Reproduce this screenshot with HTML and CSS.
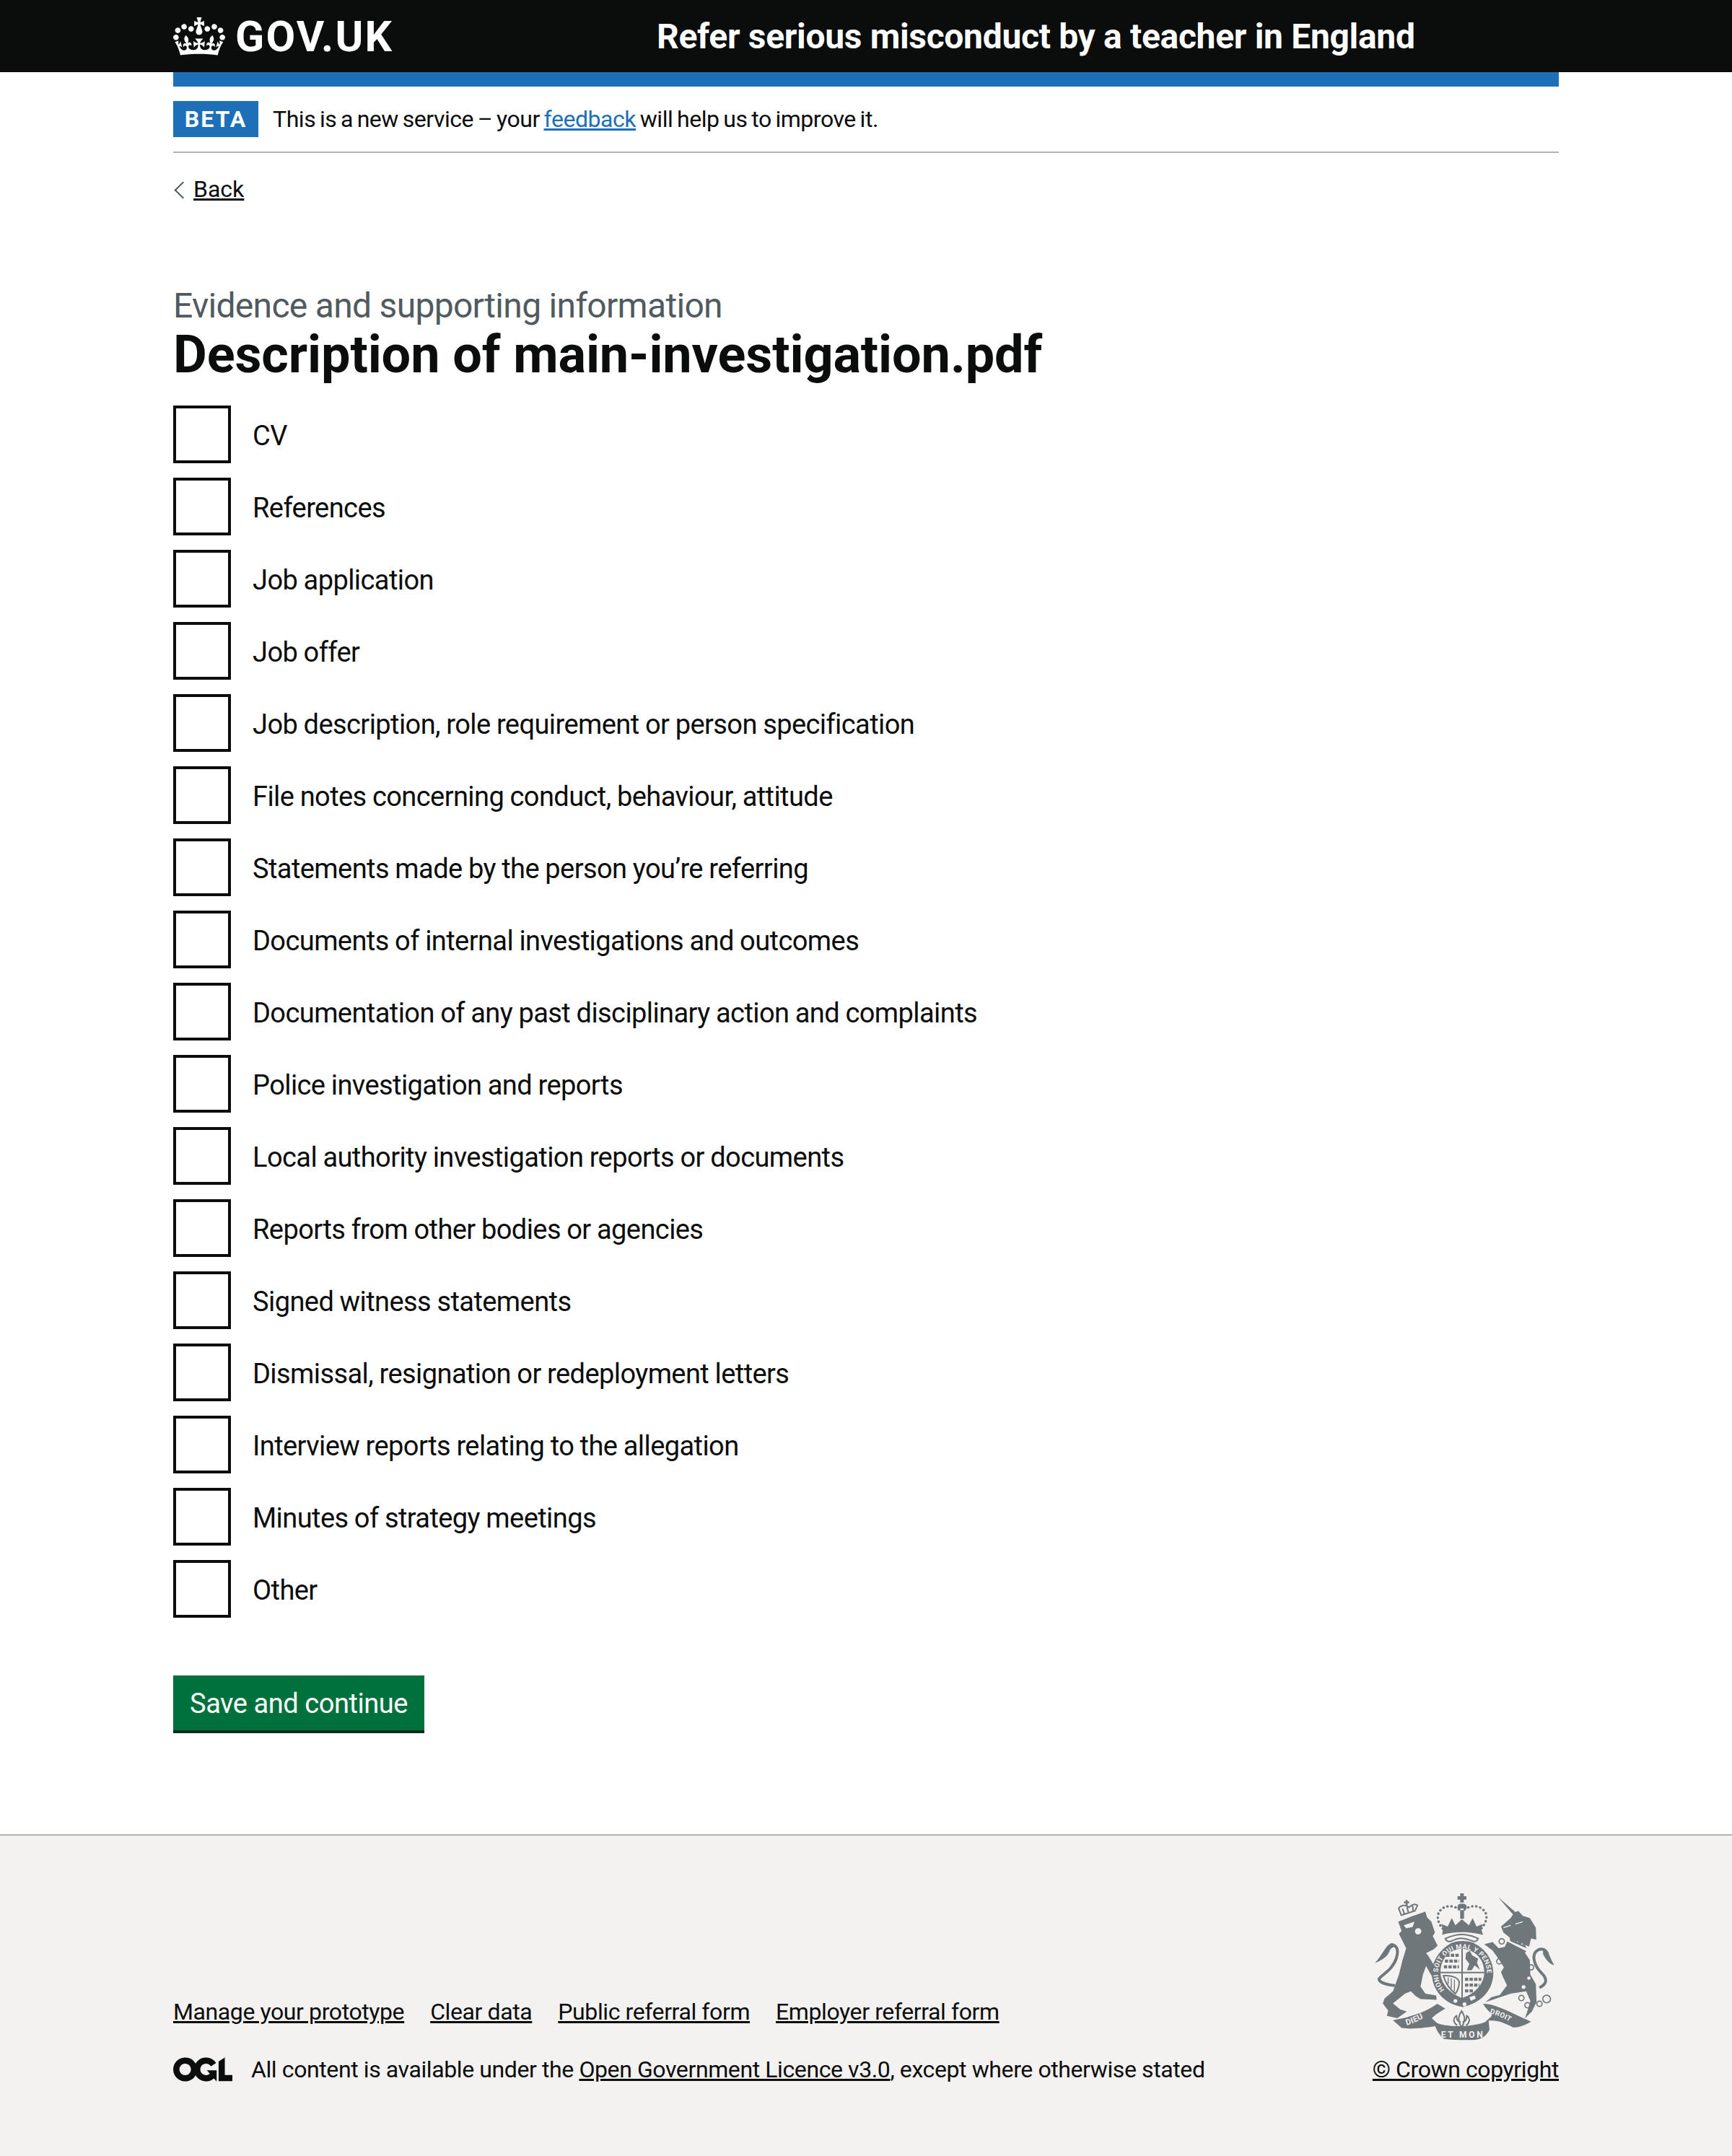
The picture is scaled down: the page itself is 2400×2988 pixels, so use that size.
FILE: index.html
```html
<!DOCTYPE html>
<html lang="en">
<head>
    <meta charset="UTF-8">
    <meta name="viewport" content="width=device-width, initial-scale=1.0">
    <title>Description of main-investigation.pdf</title>
    <link rel="stylesheet" href="styles.css">
</head>
<body>
    <header class="site-header">
        <div class="header-inner">
            <a class="logo" href="#">
                <svg class="crown" viewBox="0 0 132 97" aria-hidden="true"><path fill="currentColor" fill-rule="evenodd" d="M25 30.2c3.5 1.5 7.7-.2 9.1-3.7 1.5-3.6-.2-7.8-3.9-9.2-3.6-1.4-7.6.3-9.1 3.9-1.4 3.5.3 7.5 3.9 9zM9 39.5c3.6 1.5 7.8-.2 9.2-3.7 1.5-3.6-.2-7.8-3.9-9.1-3.6-1.5-7.6.2-9.1 3.8-1.4 3.5.3 7.5 3.8 9zM4.4 57.2c3.5 1.5 7.7-.2 9.1-3.8 1.5-3.6-.2-7.7-3.9-9.1-3.5-1.5-7.6.3-9.1 3.8-1.4 3.5.3 7.6 3.9 9.1zm38.3-21.4c3.5 1.5 7.7-.2 9.1-3.8 1.5-3.6-.2-7.7-3.9-9.1-3.6-1.5-7.6.3-9.1 3.8-1.3 3.6.4 7.7 3.9 9.1zm64.4-5.6c-3.6 1.5-7.8-.2-9.1-3.7-1.5-3.6.2-7.8 3.8-9.2 3.6-1.4 7.7.3 9.2 3.9 1.3 3.5-.4 7.5-3.9 9zm15.9 9.3c-3.6 1.5-7.7-.2-9.1-3.7-1.5-3.6.2-7.8 3.7-9.1 3.6-1.5 7.7.2 9.2 3.8 1.5 3.5-.3 7.5-3.8 9zm4.7 17.7c-3.6 1.5-7.8-.2-9.2-3.8-1.5-3.6.2-7.7 3.9-9.1 3.6-1.5 7.7.3 9.2 3.8 1.3 3.5-.4 7.6-3.9 9.1zM89.3 35.8c-3.6 1.5-7.8-.2-9.2-3.8-1.4-3.6.2-7.7 3.9-9.1 3.6-1.5 7.7.3 9.2 3.8 1.4 3.6-.3 7.7-3.9 9.1zM69.7 17.7l8.9 4.7V9.3l-8.9 2.8c-.2-.3-.5-.6-.9-.9L72.4 0H59.6l3.5 11.2c-.3.3-.6.5-.9.9l-8.8-2.8v13.1l8.8-4.7c.3.3.6.7.9.9l-5 15.4v.1c-.2.8-.4 1.6-.4 2.4 0 4.1 3.1 7.5 7 8.1h.2c.3 0 .7.1 1 .1.4 0 .7 0 1-.1h.2c4-.6 7.1-4.1 7.1-8.1 0-.8-.1-1.7-.4-2.4V34l-5.1-15.4c.4-.2.7-.6 1-.9zM66 92.8c16.9 0 32.8 1.1 47.1 3.2 4-16.9 8.9-26.7 14-33.5l-9.6-3.4c1 4.9 1.1 7.2 0 10.2-1.5-1.4-3-4.3-4.2-8.7L108.6 76c2.8-2 5-3.2 7.5-3.3-4.4 9.4-10 11.9-13.6 11.2-4.3-.8-6.3-4.6-5.6-7.9 1-4.7 5.7-5.9 8-.5 4.3-8.7-3-11.4-7.6-8.8 7.1-7.2 7.9-13.5 2.1-21.1-8 6.1-8.1 12.3-4.5 20.8-4.7-5.4-12.1-2.5-9.5 6.2 3.4-5.2 7.9-2 7.2 3.1-.6 4.3-6.4 7.8-13.5 7.2-10.3-.9-10.9-8-11.2-13.8 2.5-.5 7.1 1.8 11 7.3L80.2 60c-4.1 4.4-8 5.3-12.3 5.4 1.4-4.4 8-11.6 8-11.6H55.5s6.4 7.2 7.9 11.6c-4.2-.1-8-1-12.3-5.4l1.4 16.4c3.9-5.5 8.5-7.7 10.9-7.3-.3 5.8-.9 12.8-11.1 13.8-7.2.6-12.9-2.9-13.5-7.2-.7-5 3.8-8.3 7.1-3.1 2.7-8.7-4.6-11.6-9.4-6.2 3.7-8.5 3.6-14.7-4.6-20.8-5.8 7.6-5 13.9 2.2 21.1-4.7-2.6-11.9.1-7.7 8.8 2.3-5.5 7.1-4.2 8.1.5.7 3.3-1.3 7.1-5.7 7.9-3.5.7-9-1.8-13.5-11.2 2.5.1 4.7 1.3 7.5 3.3l-4.7-15.4c-1.2 4.4-2.7 7.2-4.3 8.7-1.1-3-.9-5.3 0-10.2l-9.5 3.4c5 6.9 9.9 16.7 14 33.5 14.8-2.1 30.8-3.2 47.7-3.2z"/></svg>
                <span class="logo-text">GOV.UK</span>
            </a>
            <a class="service-name" href="#">Refer serious misconduct by a teacher in England</a>
        </div>
    </header>

    <div class="width-container">
        <div class="blue-bar"></div>
        <div class="phase-banner">
            <strong class="tag">BETA</strong>
            <span>This is a new service – your <a class="link-blue" href="#">feedback</a> will help us to improve it.</span>
        </div>
        <a class="back-link" href="#">Back</a>

        <main class="main">
            <span class="caption">Evidence and supporting information</span>
            <h1>Description of main-investigation.pdf</h1>
            <form onsubmit="return false;">
                <div class="checkboxes">
                    <label class="checkbox"><input type="checkbox"><span>CV</span></label>
                    <label class="checkbox"><input type="checkbox"><span>References</span></label>
                    <label class="checkbox"><input type="checkbox"><span>Job application</span></label>
                    <label class="checkbox"><input type="checkbox"><span>Job offer</span></label>
                    <label class="checkbox"><input type="checkbox"><span>Job description, role requirement or person specification</span></label>
                    <label class="checkbox"><input type="checkbox"><span>File notes concerning conduct, behaviour, attitude</span></label>
                    <label class="checkbox"><input type="checkbox"><span>Statements made by the person you’re referring</span></label>
                    <label class="checkbox"><input type="checkbox"><span>Documents of internal investigations and outcomes</span></label>
                    <label class="checkbox"><input type="checkbox"><span>Documentation of any past disciplinary action and complaints</span></label>
                    <label class="checkbox"><input type="checkbox"><span>Police investigation and reports</span></label>
                    <label class="checkbox"><input type="checkbox"><span>Local authority investigation reports or documents</span></label>
                    <label class="checkbox"><input type="checkbox"><span>Reports from other bodies or agencies</span></label>
                    <label class="checkbox"><input type="checkbox"><span>Signed witness statements</span></label>
                    <label class="checkbox"><input type="checkbox"><span>Dismissal, resignation or redeployment letters</span></label>
                    <label class="checkbox"><input type="checkbox"><span>Interview reports relating to the allegation</span></label>
                    <label class="checkbox"><input type="checkbox"><span>Minutes of strategy meetings</span></label>
                    <label class="checkbox"><input type="checkbox"><span>Other</span></label>
                </div>
                <button class="button" type="submit">Save and continue</button>
            </form>
        </main>
    </div>

    <footer class="site-footer">
        <div class="footer-inner">
            <div class="footer-left">
                <ul class="footer-links">
                    <li><a href="#">Manage your prototype</a></li>
                    <li><a href="#">Clear data</a></li>
                    <li><a href="#">Public referral form</a></li>
                    <li><a href="#">Employer referral form</a></li>
                </ul>
                <div class="licence">
                    <svg class="ogl" viewBox="0 0 483.2 195.7" aria-hidden="true"><path fill="currentColor" d="M421.5 142.8V.1l-50.7 32.3v161.1h112.4v-50.7zm-122.3-9.6A47.12 47.12 0 0 1 221 97.8c0-26 21.1-47.1 47.1-47.1 16.7 0 31.4 8.7 39.7 21.8l42.7-27.2A97.63 97.63 0 0 0 268.1 0c-36.5 0-68.3 20.1-85.1 49.7A98 98 0 0 0 97.8 0C43.9 0 0 43.9 0 97.8s43.9 97.8 97.8 97.8c36.5 0 68.3-20.1 85.1-49.7a97.76 97.76 0 0 0 149.6 25.4l19.4 22.2h3v-87.8h-80l24.3 27.5zM97.8 145c-26 0-47.1-21.1-47.1-47.1s21.1-47.1 47.1-47.1 47.2 21 47.2 47S123.8 145 97.8 145"/></svg>
                    <span>All content is available under the <a href="#">Open Government Licence v3.0</a>, except where otherwise stated</span>
                </div>
            </div>
            <div class="footer-right">
                <svg class="crest" viewBox="60 60 780 640" aria-hidden="true">
                    <defs>
                        <path id="garter" d="M368 477 A102 102 0 1 1 512 477"/>
                        <path id="ribbonLeft" d="M205 622 Q262 606 316 566"/>
                        <path id="ribbonRight" d="M552 572 Q610 585 668 628"/>
                    </defs>
                    <!-- lion -->
                    <path class="crest-dark" d="M172 190 C210 175 250 160 285 148 L292 172 L310 190 L325 235 L316 250 L336 290 L320 305 L290 320 L335 395 L347 430 L328 445 L305 405 L288 375 L275 410 L265 460 L285 490 L330 497 L332 515 L265 512 L245 500 L225 480 L200 490 L150 530 L180 555 L208 564 L168 592 L125 582 L130 560 L108 530 L115 510 L150 480 L175 410 L190 350 L205 300 L190 270 L175 240 L186 228 Z"/>
                    <path class="crest-tail" d="M158 456 C120 452 92 442 92 428 C105 410 150 390 165 340 C175 305 165 285 140 285"/>
                    <path class="crest-dark" d="M145 280 C120 285 110 325 75 362 C95 355 125 340 135 315 C140 300 150 295 160 295 Z"/>
                    <path class="crest-light" d="M195 205 L240 190 L232 212 L205 218 Z M242 228 A13 13 0 1 0 268 232 A13 13 0 1 0 242 228 Z"/>
                    <path class="crest-cut" d="M290 320 L345 385 M285 470 L310 478"/>
                    <!-- lion crown -->
                    <path class="crest-line" d="M185 163 L242 145 L252 122 C240 112 228 120 217 130 C205 118 182 120 174 135 Z M208 128 L214 150 M190 136 L197 156 M232 124 L234 146"/>
                    <path class="crest-dark" d="M203 100 H211 V106 H218 V113 H211 V122 H203 V113 H196 V106 H203 Z"/>
                    <!-- unicorn -->
                    <path class="crest-dark" d="M588 88 L660 150 L672 145 L690 165 L720 175 L745 215 L747 265 L725 260 L718 290 L700 320 L720 350 L722 410 L745 450 L748 525 L728 565 L700 592 L712 555 L722 520 L705 480 L640 490 L580 510 L535 525 L560 505 L595 495 L625 455 L608 420 L600 400 L612 380 L590 345 L565 310 L530 284 L565 275 L590 300 L615 295 L635 255 L610 235 L600 210 L640 175 L650 160 Z"/>
                    <path class="crest-tail" d="M760 465 C790 450 795 430 770 405 C745 380 725 340 745 315 C765 295 785 305 795 325"/>
                    <path class="crest-dark" d="M775 300 C800 310 805 345 822 372 C800 365 785 345 775 325 Z"/>
                    <path class="crest-light" d="M628 254 L720 296 L712 316 L622 270 Z"/>
                    <path class="crest-dark" d="M636 264 L642 252 L652 266 L662 260 L668 276 L680 270 L686 286 L698 282 L706 300 L640 272 Z"/>
                    <path class="crest-cut" d="M610 215 L640 205 M660 200 L690 190"/>
                    <circle class="crest-ring" cx="603" cy="272" r="11"/>
                    <circle class="crest-ring" cx="593" cy="355" r="11"/>
                    <circle class="crest-ring" cx="725" cy="380" r="11"/>
                    <circle class="crest-light" cx="716" cy="425" r="7"/>
                    <circle class="crest-light" cx="694" cy="462" r="8"/>
                    <circle class="crest-ring" cx="685" cy="508" r="11"/>
                    <circle class="crest-ring" cx="710" cy="538" r="11"/>
                    <circle class="crest-ring" cx="760" cy="532" r="11"/>
                    <circle class="crest-ring" cx="790" cy="512" r="16"/>
                    <!-- crown over shield -->
                    <path class="crest-dark" d="M430 72 H445 V84 H456 V98 H445 V110 H430 V98 H419 V84 H430 Z M430 142 H446 V178 H430 Z"/>
                    <path class="crest-dark" d="M420 122 C425 112 450 112 456 122 L458 135 H418 Z"/>
                    <path class="crest-dots" d="M437 152 C420 125 375 115 350 140 C328 160 335 195 360 222 M437 152 C455 125 500 115 525 140 C550 160 540 195 515 222"/>
                    <path class="crest-dark" d="M358 222 L352 200 L378 210 L395 175 L410 205 L437 180 L466 205 L482 175 L498 210 L524 200 L518 222 L525 245 C470 230 405 230 355 245 Z"/>
                    <path class="crest-line" d="M368 260 C420 238 460 238 505 260 C500 272 490 275 480 270 C440 255 425 255 395 270 C385 276 372 272 368 260 Z"/>
                    <!-- garter and shield -->
                    <path class="crest-dark" d="M395 278 C425 268 455 268 485 278 L505 290 C545 315 568 360 568 405 C568 470 520 530 440 545 C365 535 312 475 312 405 C312 355 345 305 395 278 Z"/>
                    <path class="crest-light" d="M348 400 C348 340 390 305 438 303 C490 305 530 345 530 400 C530 450 490 490 438 508 C390 490 348 450 348 400 Z"/>
                    <text class="crest-text" font-size="28" letter-spacing="1"><textPath href="#garter" startOffset="1%">HONI SOIT QUI MAL Y PENSE</textPath></text>
                    <path class="crest-quarter" d="M438 303 V508 M348 402 H530"/>
                    <path class="crest-lions" d="M372 330 H425 M366 354 H425 M362 378 H425 M450 430 H518 M450 454 H510 M450 478 H488"/>
                    <path class="crest-dark" d="M455 320 L470 312 L480 330 L505 345 L500 362 L512 390 L490 372 L478 392 H458 L468 365 L452 345 Z"/>
                    <path class="crest-harp" d="M360 415 C392 412 420 422 426 440 C426 465 416 482 410 490 C385 470 368 442 360 415 Z"/>
                    <path class="crest-strings" d="M380 422 V450 M393 426 V468 M406 432 V480"/>
                    <circle class="crest-light" cx="410" cy="520" r="8"/>
                    <circle class="crest-light" cx="448" cy="534" r="8"/>
                    <path class="crest-light" d="M468 505 L490 497 L495 510 L475 520 Z"/>
                    <!-- fleur de lis -->
                    <path class="crest-line" d="M436 562 C420 585 420 600 436 632 C452 600 452 585 436 562 Z M418 622 C400 610 400 590 415 582 C415 600 420 605 432 608 M454 622 C472 610 472 590 457 582 C457 600 452 605 440 608"/>
                    <!-- motto ribbon -->
                    <path class="crest-dark" d="M150 600 C215 590 280 570 335 532 L368 552 C345 565 325 578 312 592 C325 606 335 612 345 622 C290 632 220 640 185 632 Z"/>
                    <path class="crest-dark" d="M525 532 C575 530 640 570 725 606 C700 622 670 632 650 630 C610 610 575 595 535 605 C548 595 560 588 562 578 C550 562 535 550 525 532 Z"/>
                    <path class="crest-dark" d="M318 605 C360 632 500 632 548 600 L552 640 C540 665 520 680 490 682 C450 684 400 682 362 678 C345 665 330 640 318 605 Z"/>
                    <text class="crest-text" font-size="34" letter-spacing="1"><textPath href="#ribbonLeft" startOffset="2%">DIEU</textPath></text>
                    <text class="crest-text" font-size="30" letter-spacing="1"><textPath href="#ribbonRight" startOffset="1%">DROIT</textPath></text>
                    <text class="crest-text" font-size="36" x="350" y="672" textLength="174">ET MON</text>
                </svg>
                <a href="#">© Crown copyright</a>
            </div>
        </div>
    </footer>
</body>
</html>
```

FILE: styles.css
```css
* {
    box-sizing: border-box;
}
body {
    margin: 0;
    font-family: Roboto, Arial, sans-serif;
    color: #0b0c0c;
    background: #fff;
}
a {
    color: inherit;
}

/* header */
.site-header {
    height: 100px;
    background: #0b0c0c;
    color: #fff;
}
.header-inner {
    width: 1920px;
    height: 100px;
    margin: 0 auto;
    display: flex;
    align-items: center;
}
.logo {
    width: 670px;
    display: flex;
    align-items: center;
    gap: 14px;
    color: #fff;
    text-decoration: none;
}
.crown {
    width: 72px;
    height: 53px;
}
.logo-text {
    font-size: 59px;
    font-weight: 700;
    line-height: 1;
    letter-spacing: 2.2px;
}
.service-name {
    font-size: 48px;
    font-weight: 700;
    letter-spacing: -0.32px;
    color: #fff;
    text-decoration: none;
}

/* page */
.width-container {
    width: 1920px;
    margin: 0 auto;
}
.blue-bar {
    height: 20px;
    background: #1d70b8;
}
.phase-banner {
    display: flex;
    align-items: center;
    gap: 20px;
    padding: 20px 0;
    border-bottom: 2px solid #b1b4b6;
    font-size: 32px;
    line-height: 50px;
    letter-spacing: -0.45px;
    word-spacing: -1.8px;
}
.tag {
    width: 118px;
    height: 50px;
    background: #1d70b8;
    color: #fff;
    font-size: 32px;
    font-weight: 700;
    letter-spacing: 2px;
    text-align: center;
    line-height: 50px;
}
.link-blue {
    color: #1d70b8;
}
.back-link {
    display: inline-block;
    position: relative;
    margin-top: 30px;
    margin-left: 28px;
    font-size: 32px;
    line-height: 40px;
}
.back-link::before {
    content: "";
    position: absolute;
    left: -23px;
    top: 13px;
    width: 15px;
    height: 15px;
    border-left: 2px solid #505a5f;
    border-bottom: 2px solid #505a5f;
    transform: rotate(45deg);
}
.main {
    padding-top: 114px;
    padding-bottom: 140px;
}
.caption {
    display: block;
    font-size: 48px;
    line-height: 56px;
    letter-spacing: -0.7px;
    color: #505a5f;
}
h1 {
    margin: 0 0 30px;
    font-size: 72px;
    font-weight: 700;
    line-height: 80px;
    letter-spacing: -0.1px;
}
.checkboxes {
    display: flex;
    flex-direction: column;
    gap: 20px;
    margin-bottom: 80px;
}
.checkbox {
    display: flex;
    align-items: center;
    gap: 30px;
    height: 80px;
    font-size: 38px;
    letter-spacing: -0.58px;
    word-spacing: -0.5px;
}
.checkbox span {
    padding-top: 4px;
}
.checkbox input {
    appearance: none;
    flex: none;
    width: 80px;
    height: 80px;
    margin: 0;
    background: #fff;
    border: 4px solid #0b0c0c;
}
.button {
    display: block;
    height: 80px;
    width: 348px;
    padding: 2px 0 0;
    border: none;
    border-bottom: 4px solid #002d18;
    background: #00703c;
    color: #fff;
    font-family: inherit;
    font-size: 38px;
    letter-spacing: -0.45px;
}

/* footer */
.site-footer {
    height: 446px;
    background: #f3f2f1;
    border-top: 2px solid #b1b4b6;
}
.footer-inner {
    width: 1920px;
    height: 100%;
    margin: 0 auto;
    padding-bottom: 100px;
    display: flex;
    justify-content: space-between;
    align-items: flex-end;
    font-size: 32px;
    line-height: 40px;
    letter-spacing: -0.4px;
}
.footer-links {
    display: flex;
    gap: 36px;
    list-style: none;
    margin: 0 0 40px;
    padding: 0;
}
.licence {
    display: flex;
    align-items: center;
    gap: 26px;
}
.ogl {
    flex: none;
    width: 82px;
    height: 34px;
}
.footer-right {
    flex: none;
    display: flex;
    flex-direction: column;
    align-items: flex-end;
}
.crest {
    width: 260px;
    height: 213px;
    margin-bottom: 15px;
}
.crest-dark {
    fill: #6f777b;
}
.crest-light {
    fill: #f3f2f1;
}
.crest-line {
    fill: none;
    stroke: #6f777b;
    stroke-width: 6;
}
.crest-tail {
    fill: none;
    stroke: #6f777b;
    stroke-width: 12;
}
.crest-cut {
    fill: none;
    stroke: #f3f2f1;
    stroke-width: 4;
}
.crest-ring {
    fill: none;
    stroke: #6f777b;
    stroke-width: 5;
}
.crest-dots {
    fill: none;
    stroke: #6f777b;
    stroke-width: 10;
    stroke-linecap: round;
    stroke-dasharray: 1 16;
}
.crest-text {
    fill: #f3f2f1;
    font-weight: 700;
}
.crest-quarter {
    fill: none;
    stroke: #6f777b;
    stroke-width: 6;
}
.crest-lions {
    fill: none;
    stroke: #6f777b;
    stroke-width: 13;
    stroke-dasharray: 14 5;
}
.crest-harp {
    fill: #f3f2f1;
    stroke: #6f777b;
    stroke-width: 6;
}
.crest-strings {
    fill: none;
    stroke: #6f777b;
    stroke-width: 4;
}
```
